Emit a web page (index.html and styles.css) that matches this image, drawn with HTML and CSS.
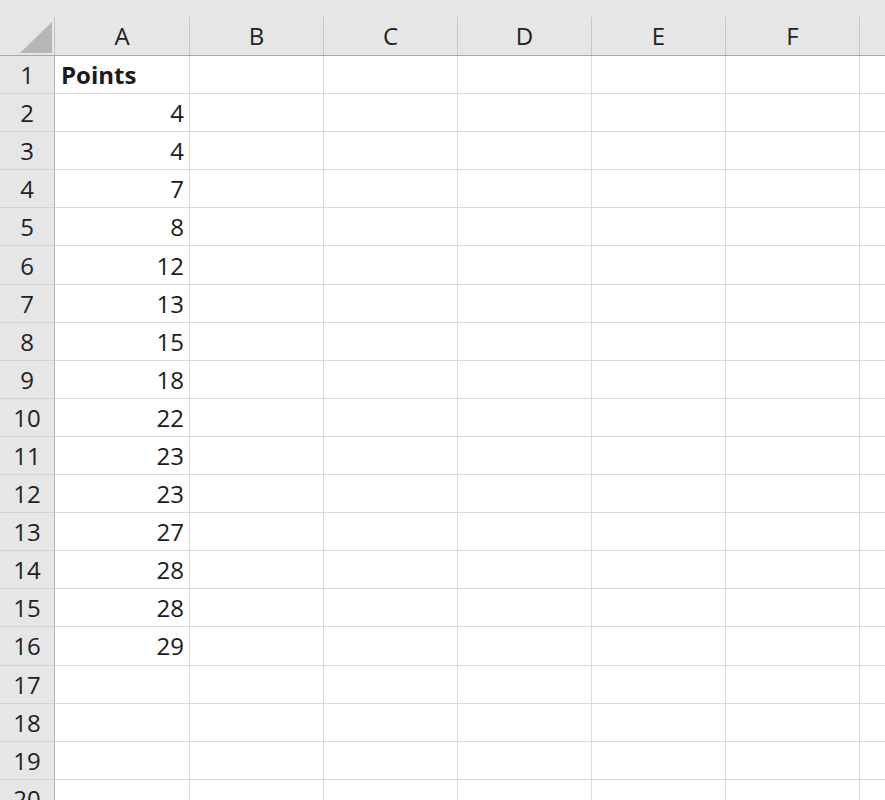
FILE: index.html
```html
<!DOCTYPE html>
<html lang="en">
<head>
  <meta charset="UTF-8">
  <title>Points</title>
  <link rel="stylesheet" href="styles.css">
</head>
<body>
  <div class="sheet">
    <div class="head">
      <div class="corner"><span class="tri"></span></div>
      <div class="col">A</div><div class="col">B</div><div class="col">C</div><div class="col">D</div><div class="col">E</div><div class="col">F</div><div class="col"></div>
    </div>
    <div class="row"><div class="num">1</div><div class="cell bold">Points</div><div class="cell"></div><div class="cell"></div><div class="cell"></div><div class="cell"></div><div class="cell"></div><div class="cell"></div></div>
    <div class="row"><div class="num">2</div><div class="cell val">4</div><div class="cell"></div><div class="cell"></div><div class="cell"></div><div class="cell"></div><div class="cell"></div><div class="cell"></div></div>
    <div class="row"><div class="num">3</div><div class="cell val">4</div><div class="cell"></div><div class="cell"></div><div class="cell"></div><div class="cell"></div><div class="cell"></div><div class="cell"></div></div>
    <div class="row"><div class="num">4</div><div class="cell val">7</div><div class="cell"></div><div class="cell"></div><div class="cell"></div><div class="cell"></div><div class="cell"></div><div class="cell"></div></div>
    <div class="row"><div class="num">5</div><div class="cell val">8</div><div class="cell"></div><div class="cell"></div><div class="cell"></div><div class="cell"></div><div class="cell"></div><div class="cell"></div></div>
    <div class="row"><div class="num">6</div><div class="cell val">12</div><div class="cell"></div><div class="cell"></div><div class="cell"></div><div class="cell"></div><div class="cell"></div><div class="cell"></div></div>
    <div class="row"><div class="num">7</div><div class="cell val">13</div><div class="cell"></div><div class="cell"></div><div class="cell"></div><div class="cell"></div><div class="cell"></div><div class="cell"></div></div>
    <div class="row"><div class="num">8</div><div class="cell val">15</div><div class="cell"></div><div class="cell"></div><div class="cell"></div><div class="cell"></div><div class="cell"></div><div class="cell"></div></div>
    <div class="row"><div class="num">9</div><div class="cell val">18</div><div class="cell"></div><div class="cell"></div><div class="cell"></div><div class="cell"></div><div class="cell"></div><div class="cell"></div></div>
    <div class="row"><div class="num">10</div><div class="cell val">22</div><div class="cell"></div><div class="cell"></div><div class="cell"></div><div class="cell"></div><div class="cell"></div><div class="cell"></div></div>
    <div class="row"><div class="num">11</div><div class="cell val">23</div><div class="cell"></div><div class="cell"></div><div class="cell"></div><div class="cell"></div><div class="cell"></div><div class="cell"></div></div>
    <div class="row"><div class="num">12</div><div class="cell val">23</div><div class="cell"></div><div class="cell"></div><div class="cell"></div><div class="cell"></div><div class="cell"></div><div class="cell"></div></div>
    <div class="row"><div class="num">13</div><div class="cell val">27</div><div class="cell"></div><div class="cell"></div><div class="cell"></div><div class="cell"></div><div class="cell"></div><div class="cell"></div></div>
    <div class="row"><div class="num">14</div><div class="cell val">28</div><div class="cell"></div><div class="cell"></div><div class="cell"></div><div class="cell"></div><div class="cell"></div><div class="cell"></div></div>
    <div class="row"><div class="num">15</div><div class="cell val">28</div><div class="cell"></div><div class="cell"></div><div class="cell"></div><div class="cell"></div><div class="cell"></div><div class="cell"></div></div>
    <div class="row"><div class="num">16</div><div class="cell val">29</div><div class="cell"></div><div class="cell"></div><div class="cell"></div><div class="cell"></div><div class="cell"></div><div class="cell"></div></div>
    <div class="row"><div class="num">17</div><div class="cell"></div><div class="cell"></div><div class="cell"></div><div class="cell"></div><div class="cell"></div><div class="cell"></div><div class="cell"></div></div>
    <div class="row"><div class="num">18</div><div class="cell"></div><div class="cell"></div><div class="cell"></div><div class="cell"></div><div class="cell"></div><div class="cell"></div><div class="cell"></div></div>
    <div class="row"><div class="num">19</div><div class="cell"></div><div class="cell"></div><div class="cell"></div><div class="cell"></div><div class="cell"></div><div class="cell"></div><div class="cell"></div></div>
    <div class="row"><div class="num">20</div><div class="cell"></div><div class="cell"></div><div class="cell"></div><div class="cell"></div><div class="cell"></div><div class="cell"></div><div class="cell"></div></div>
  </div>
</body>
</html>
```
FILE: styles.css
```css
body{
  margin: 0;
  background-color: #fff;
  font-family: "Open Sans", "Noto Sans", sans-serif;
  color: #1a1a1a;
  overflow: hidden;
}
.sheet{
  width: 885px;
  height: 800px;
  overflow: hidden;
}
.head,
.row{
  display: grid;
  grid-template-columns: 55px 135px repeat(6, 134px);
}
.head{
  height: 56px;
  padding-top: 17px;
  box-sizing: border-box;
  background-color: #e6e6e6;
  border-bottom: 1px solid #a9a9a9;
}
.corner{
  position: relative;
  border-right: 1px solid #c4c4c4;
}
.tri{
  position: absolute;
  right: 2px;
  bottom: 2px;
  width: 32px;
  height: 31px;
  background-color: #b6b6b6;
  clip-path: polygon(100% 0, 100% 100%, 0 100%);
}
.col{
  border-right: 1px solid #c8c8c8;
  display: flex;
  align-items: center;
  justify-content: center;
  font-size: 24px;
  color: #222;
  padding-bottom: 2px;
}
.row{
  height: 38.1px;
}
.num{
  background-color: #e6e6e6;
  border-right: 1px solid #b4b4b4;
  border-bottom: 1px solid #d2d2d2;
  display: flex;
  align-items: center;
  justify-content: center;
  font-size: 24px;
  color: #222;
}
.cell{
  border-right: 1px solid #dadada;
  border-bottom: 1px solid #dadada;
  display: flex;
  align-items: center;
  font-size: 24px;
  padding: 0 5px 0 6px;
}
.bold{
  font-weight: bold;
}
.val{
  justify-content: flex-end;
}
```
